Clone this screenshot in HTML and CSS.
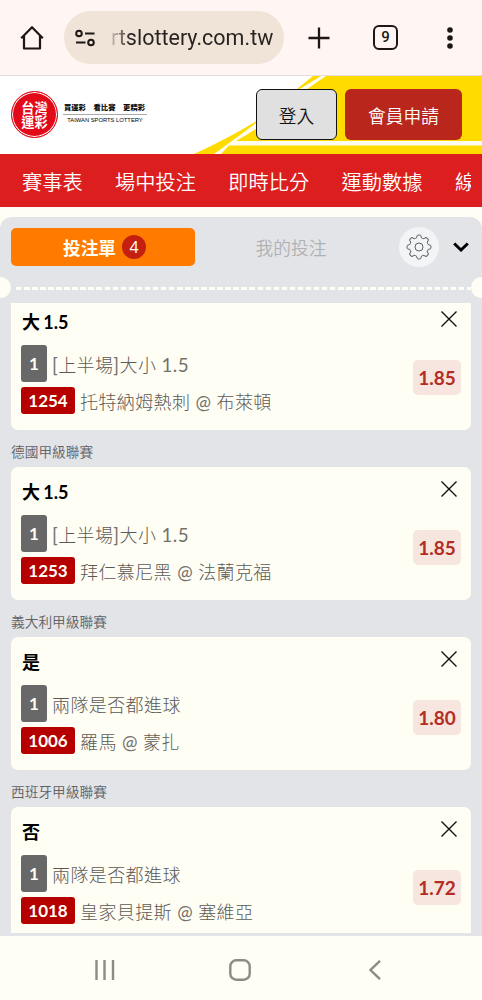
FILE: index.html
```html
<!DOCTYPE html>
<html lang="zh-Hant">
<head>
<meta charset="utf-8">
<title>台灣運彩</title>
<link rel="stylesheet" href="styles.css">
</head>
<body>
<div class="screen">
  <header class="browser">
    <svg class="home" width="26" height="26" viewBox="0 0 26 26"><path d="M2.200 13.200 13 2.200l10.800 11M5 11v12.500h16V11" fill="none" stroke="#1b1815" stroke-width="2.200" stroke-linejoin="round"/></svg>
    <div class="address">
      <svg width="21" height="18" viewBox="0 0 21 18" fill="none" stroke="#1b1815" stroke-width="2"><circle cx="4" cy="4.500" r="2.800"/><path d="M10 4.500h9.500M1 13.500h9.500"/><circle cx="16" cy="13.500" r="2.800"/></svg>
      <span class="url">rtslottery.com.tw</span>
    </div>
    <svg class="plus" width="22" height="22" viewBox="0 0 22 22"><path d="M11 .5v21M.5 11h21" stroke="#1b1815" stroke-width="2.300"/></svg>
    <span class="tabs">9</span>
    <svg class="more" width="6" height="22" viewBox="0 0 6 22" fill="#1b1815"><circle cx="3" cy="3" r="2.800"/><circle cx="3" cy="11" r="2.800"/><circle cx="3" cy="19" r="2.800"/></svg>
  </header>

  <div class="site">
    <svg class="stripes" width="302" height="78" viewBox="0 0 302 78">
      <path d="M14 78Q90 43 118 12L133 0H302V78Z" fill="#ffdb00"/>
      <path d="M34 78Q82 44 113 17L141 0h5L114 22Q84 50 56 65H302v4.500H49L41 78Z" fill="#fffdf0"/>
    </svg>
    <div class="logo">
      <div class="seal"><span>台灣</span><span>運彩</span></div>
      <div class="slogan">
        <div class="motto"><span>買運彩</span><span>看比賽</span><span>更精彩</span></div>
        <div class="english">TAIWAN SPORTS LOTTERY</div>
      </div>
    </div>
    <div class="actions"><button class="login">登入</button><button class="join">會員申請</button></div>
  </div>

  <nav class="nav"><div class="nav-items"><span>賽事表</span><span>場中投注</span><span>即時比分</span><span>運動數據</span><span>線</span></div></nav>

  <main class="slip">
    <div class="slip-head">
      <div class="tab-on">投注單<span class="count">4</span></div>
      <div class="tab-off">我的投注</div>
      <div class="gear">
        <svg width="26" height="26" viewBox="-13 -13 26 26" fill="none" stroke="#606265" stroke-width="1">
          <defs><path id="tooth" d="M-3.600-8.700Q-2.500-8.500-2.200-9.900L-1.900-11.200Q-1.700-11.900-1-11.900H1Q1.700-11.900 1.900-11.200L2.200-9.900Q2.500-8.500 3.600-8.700"/></defs>
          <use href="#tooth"/><use href="#tooth" transform="rotate(45)"/><use href="#tooth" transform="rotate(90)"/><use href="#tooth" transform="rotate(135)"/><use href="#tooth" transform="rotate(180)"/><use href="#tooth" transform="rotate(225)"/><use href="#tooth" transform="rotate(270)"/><use href="#tooth" transform="rotate(315)"/>
          <circle r="4"/>
        </svg>
      </div>
      <svg class="chevron" width="16" height="10" viewBox="0 0 16 10"><path d="M1.200 1.500 8 8l6.800-6.500" fill="none" stroke="#000" stroke-width="3"/></svg>
    </div>
    <div class="tear"><i class="notch"></i><i class="dashes"></i><i class="notch right"></i></div>

    <div class="bets">
      <section class="card first">
        <div class="info"><h3>大 1.5</h3>
          <p class="market"><b class="num">1</b><span><span class="latin">[</span>上半場<span class="latin">]</span>大小<span class="latin"> 1.5</span></span></p>
          <p class="match"><b class="code">1254</b><span>托特納姆熱刺<span class="at"> @ </span>布萊頓</span></p></div>
        <div class="side"><svg class="close" viewBox="0 0 16 16"><path d="M.5.5l15 15m0-15-15 15"/></svg><span class="odds">1.85</span></div>
      </section>
      <h4>德國甲級聯賽</h4>
      <section class="card">
        <div class="info"><h3>大 1.5</h3>
          <p class="market"><b class="num">1</b><span><span class="latin">[</span>上半場<span class="latin">]</span>大小<span class="latin"> 1.5</span></span></p>
          <p class="match"><b class="code">1253</b><span>拜仁慕尼黑<span class="at"> @ </span>法蘭克福</span></p></div>
        <div class="side"><svg class="close" viewBox="0 0 16 16"><path d="M.5.5l15 15m0-15-15 15"/></svg><span class="odds">1.85</span></div>
      </section>
      <h4>義大利甲級聯賽</h4>
      <section class="card">
        <div class="info"><h3>是</h3>
          <p class="market"><b class="num">1</b>兩隊是否都進球</p>
          <p class="match"><b class="code">1006</b><span>羅馬<span class="at"> @ </span>蒙扎</span></p></div>
        <div class="side"><svg class="close" viewBox="0 0 16 16"><path d="M.5.5l15 15m0-15-15 15"/></svg><span class="odds">1.80</span></div>
      </section>
      <h4>西班牙甲級聯賽</h4>
      <section class="card last">
        <div class="info"><h3>否</h3>
          <p class="market"><b class="num">1</b>兩隊是否都進球</p>
          <p class="match"><b class="code">1018</b><span>皇家貝提斯<span class="at"> @ </span>塞維亞</span></p></div>
        <div class="side"><svg class="close" viewBox="0 0 16 16"><path d="M.5.5l15 15m0-15-15 15"/></svg><span class="odds">1.72</span></div>
      </section>
    </div>
  </main>

  <footer class="system">
    <svg width="20" height="20" viewBox="0 0 20 20"><path d="M1.500 0v20M9.500 0v20M18 0v20"/></svg>
    <svg width="22" height="22" viewBox="0 0 22 22"><rect x="1.300" y="1.300" width="19.400" height="19.400" rx="6"/></svg>
    <svg width="12" height="20" viewBox="0 0 12 20"><path d="M11 .8 1.500 10l9.500 9.200"/></svg>
  </footer>
</div>
</body>
</html>
```

FILE: styles.css
```css
* { box-sizing: border-box; }
body { margin: 0; }
h3, h4, p { margin: 0; }
.screen {
  width: 482px; height: 1000px; overflow: hidden;
  display: flex; flex-direction: column;
  background: #fffef5;
  font-family: Lato, "Noto Sans CJK TC", sans-serif;
}
.browser {
  flex: none; height: 76px; padding: 0 29px 0 19px;
  display: flex; align-items: center;
  background: #fff5f2; border-bottom: 1px solid #e9dcd8;
}
.address {
  margin-left: 19px; width: 220px; height: 53px; padding-left: 11px;
  border-radius: 27px; background: #f0e4d9;
  display: flex; align-items: center; gap: 12px;
}
.url {
  font: 21.5px/30px Roboto, sans-serif; white-space: nowrap; padding-left: 3px;
  color: transparent; background: linear-gradient(90deg, #e6dacf, #26221f 22px);
  background-clip: text; -webkit-background-clip: text;
}
.plus { margin-left: 24px; }
.tabs {
  margin-left: 43px; width: 25px; height: 25px;
  border: 2.3px solid #1b1815; border-radius: 6px;
  font: 500 15px/21px Roboto, sans-serif; text-align: center; color: #1b1815;
}
.more { margin-left: auto; }

.site {
  flex: none; height: 78px; position: relative; background: #fff;
  display: flex; justify-content: space-between; padding: 13px 20px 0 11px;
}
.stripes { position: absolute; right: 0; top: 0; }
.logo { display: flex; gap: 5px; }
.seal {
  width: 47px; height: 47px; margin-top: 2px; border-radius: 50%;
  border: 1.5px solid #e20a18; box-shadow: inset 0 0 0 1px #fff;
  background: #e20a18; color: #fff;
  display: flex; flex-direction: column; align-items: center; justify-content: center;
  font: 700 13.2px/14px "Noto Sans CJK TC", sans-serif;
}
.slogan { width: 84px; padding-top: 12px; }
.motto {
  display: flex; justify-content: space-between; padding: 0 2px 0 1px; height: 14px;
  font: 900 7.3px/13px "Noto Sans CJK TC", sans-serif; color: #111;
  border-bottom: 1px solid #aaa;
}
.english { font: 5.8px/10px "Liberation Sans", sans-serif; color: #000; text-align: center; white-space: nowrap; }
.actions { position: relative; display: flex; gap: 8px; }
.actions button {
  height: 51px; border-radius: 6px; padding: 0;
  font: 350 17.7px/26px "Noto Sans CJK TC", sans-serif;
}
.login { width: 81px; background: #e0e0e0; border: 1px solid #111; color: #111; }
.join { width: 117px; background: #b8261c; border: 0; color: #fff; }

.nav { flex: none; height: 53px; background: #dc1e1e; padding: 0 11px; }
.nav-items {
  display: flex; gap: 32.5px; overflow: hidden; padding-left: 11px;
  font: 350 20.2px/55px "Noto Sans CJK TC", sans-serif; color: #fff; white-space: nowrap;
}
.nav-items span { flex: none; }

.slip {
  flex: none; margin-top: 10px; height: 719px; overflow: hidden;
  background: #e3e4e7; border-radius: 12px 12px 0 0;
}
.slip-head { display: flex; align-items: center; height: 60px; padding: 0 13px 0 11px; }
.tab-on {
  width: 184px; height: 38px; border-radius: 5px; background: #ff7b00; color: #fffef5;
  display: flex; align-items: center; justify-content: center; gap: 6px;
  padding-left: 3px;
  font: bold 17.7px/38px "Noto Sans CJK TC", sans-serif;
}
.count {
  width: 24px; height: 24px; border-radius: 50%; background: #c51f12;
  font: 16px/24px "Noto Sans", sans-serif; text-align: center;
}
.tab-off { width: 192px; text-align: center; font: 350 17.7px/38px "Noto Sans CJK TC", sans-serif; color: #b0b1b3; }
.gear {
  margin-left: 12px; width: 40px; height: 40px; border-radius: 50%; background: #f3f4f6;
  display: flex; align-items: center; justify-content: center;
}
.chevron { margin-left: auto; }
.tear { height: 21px; display: flex; align-items: center; justify-content: space-between; }
.notch { width: 11px; height: 21px; border-radius: 0 11px 11px 0; background: #fffef5; }
.notch.right { border-radius: 11px 0 0 11px; }
.dashes { flex: 1; height: 3px; margin-top: 2px; background: repeating-linear-gradient(90deg, #fffef5 0 5.5px, transparent 5.5px 8.050px); margin-left: 5px; }

.bets { margin: 5px 11px 0; height: 630px; overflow: hidden; }
.card {
  height: 133px; border-radius: 7px; background: #fffef5; padding: 11px 10px 0;
  display: flex; justify-content: space-between;
}
.card.first { height: 127px; padding-top: 5px; border-radius: 0 0 7px 7px; }
h3 { font-size: 18px; line-height: 29px; height: 28px; font-weight: 700; color: #000; padding-left: 1px; word-spacing: -1px; }
.info p {
  display: flex; align-items: center; white-space: nowrap;
  font-weight: 300; font-size: 18px; letter-spacing: .4px; color: #5c5a56;
}
.latin { font-weight: 400; font-size: 18.8px; color: #74726d; white-space: pre; }
.at { font-weight: 400; font-size: 18.5px; color: #74726d; white-space: pre; }
.market { height: 37px; margin-top: 9px; gap: 5px; }
.match { height: 27px; margin-top: 5px; gap: 5px; }
.num, .code { color: #fffef5; font-size: 17px; font-weight: 700; letter-spacing: 0; text-align: center; border-radius: 3px; }
.info .num { width: 26px; height: 37px; line-height: 38px; background: #686868; }
.info .code { width: 54px; height: 27px; line-height: 28px; background: #b60000; }
.side { display: flex; flex-direction: column; align-items: flex-end; padding-top: 3px; }
.close { width: 16px; height: 16px; margin-right: 4px; fill: none; stroke: #111; stroke-width: 1.4; }
.odds {
  margin-top: 33px; width: 48px; height: 35px; border-radius: 5px;
  background: #f7e6df; color: #b32d25; text-align: center;
  font-weight: 700; font-size: 19px; line-height: 35px;
}
h4 { height: 37px; line-height: 44px; font-size: 13.7px; font-weight: 350; color: #606164; }

.system { flex: 1; display: flex; align-items: center; padding: 3px 101px 0 95px; justify-content: space-between; }
.system svg { fill: none; stroke: #8d8b84; stroke-width: 2.4; }
.system svg:nth-child(2) { margin-right: 4px; }
```
